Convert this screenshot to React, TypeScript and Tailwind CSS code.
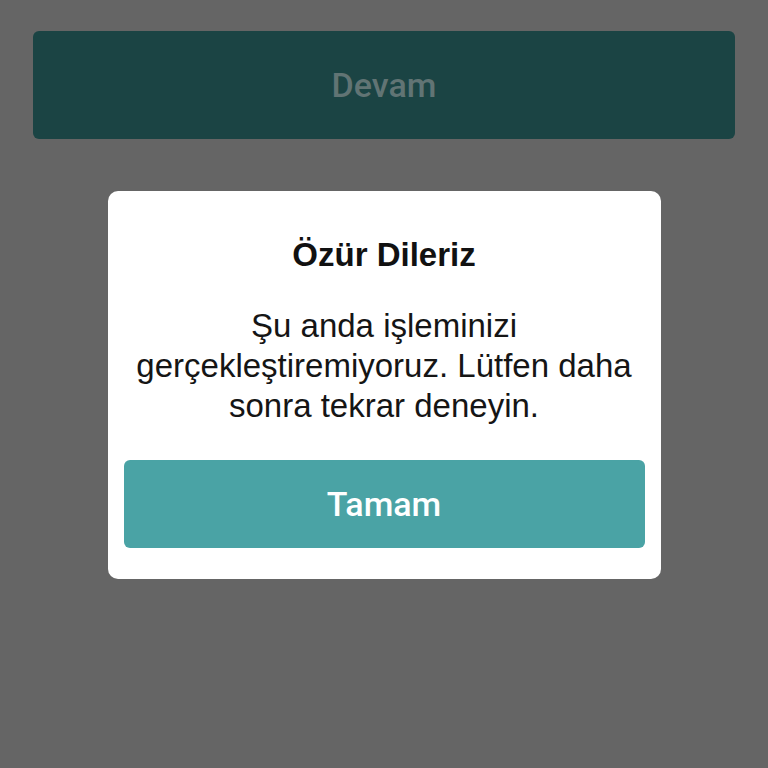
export default function App() {
  return (
    <div
      className="flex h-[768px] w-[768px] flex-col bg-[#656565]"
      style={{ fontFamily: '"Liberation Sans", Arial, sans-serif' }}
    >
      {/* Arka plandaki devam butonu */}
      <div className="mx-[33px] mt-[31px] flex h-[108px] items-center justify-center rounded-[6px] bg-[#1b4444]">
        <span className="font-['Roboto',sans-serif] text-[34px] font-medium text-[#617474]">Devam</span>
      </div>

      {/* Uyarı penceresi */}
      <div className="mx-auto mt-[52px] w-[553px] rounded-[10px] bg-white px-4 pb-[31px] pt-[46px] text-center">
        <h2 className="text-[33px] font-bold leading-[36px] text-[#111]">Özür Dileriz</h2>
        <p className="mt-[33px] px-2 text-[33px] leading-[40px] text-[#151515]">
          Şu anda işleminizi gerçekleştiremiyoruz. Lütfen daha sonra tekrar deneyin.
        </p>
        <button
          type="button"
          className="mt-[34px] flex h-[88px] w-full items-center justify-center rounded-[6px] bg-[#4aa3a5] font-['Roboto',sans-serif] text-[34px] font-medium text-white"
        >
          Tamam
        </button>
      </div>
    </div>
  );
}
